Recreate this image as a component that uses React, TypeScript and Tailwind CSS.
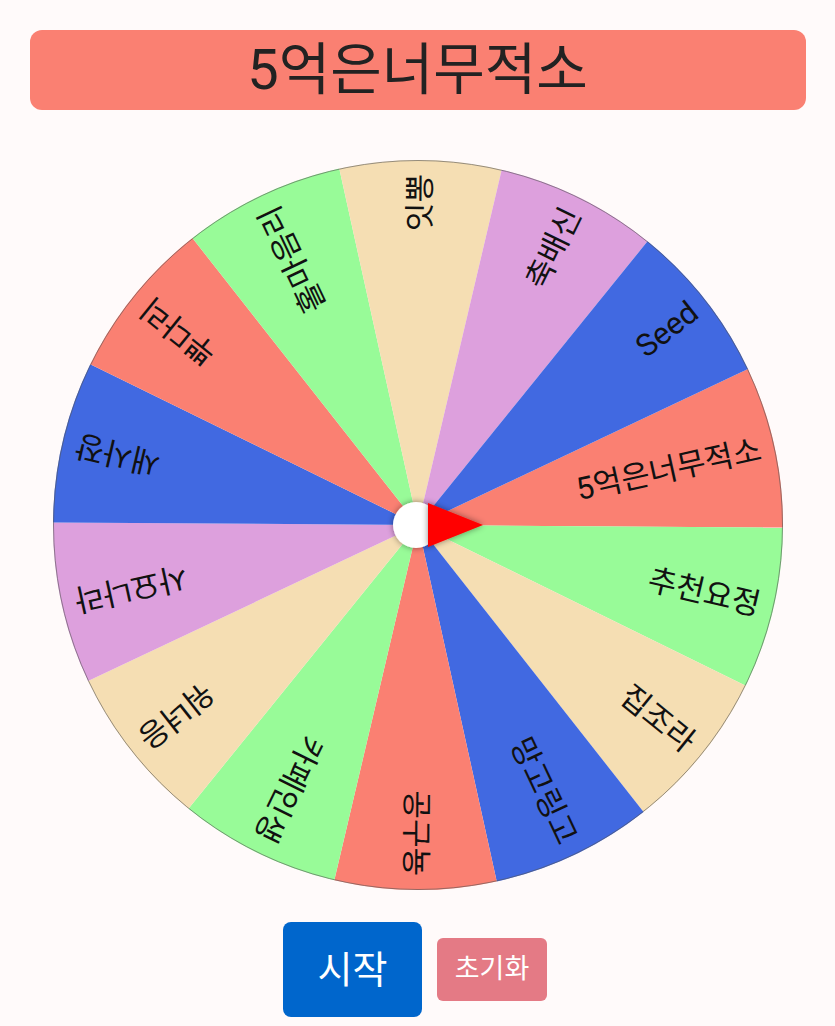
import React from 'react';

const CX = 370;
const CY = 370;
const R = 365;
const OFFSET = 0.4;

const items = [
  { label: '5억은너무적소', color: '#fa8072' },
  { label: '추천요정', color: '#98fb98' },
  { label: '집조라', color: '#f5deb3' },
  { label: '망고링고', color: '#4169e1' },
  { label: '공구뇽', color: '#fa8072' },
  { label: '카페인생', color: '#98fb98' },
  { label: '워녀응', color: '#f5deb3' },
  { label: '사요나라', color: '#dda0dd' },
  { label: '새사장', color: '#4169e1' },
  { label: '뿌다리', color: '#fa8072' },
  { label: '홀마음리', color: '#98fb98' },
  { label: '잇뽕', color: '#f5deb3' },
  { label: '축배신', color: '#dda0dd' },
  { label: 'Seed', color: '#4169e1' },
];

const step = 360 / items.length;
const rad = (d: number) => (d * Math.PI) / 180;
const pt = (d: number, r: number) => [CX + r * Math.cos(rad(d)), CY + r * Math.sin(rad(d))];

const Wheel = () => (
  <svg width={740} height={740} viewBox="0 0 740 740">
    <defs>
      <filter id="shadow" x="-50%" y="-50%" width="200%" height="200%">
        <feDropShadow dx="0" dy="0" stdDeviation="3" floodColor="#000" floodOpacity="0.45" />
      </filter>
    </defs>
    {items.map((it, i) => {
      const a1 = OFFSET + (i - 1) * step;
      const a2 = a1 + step;
      const [x1, y1] = pt(a1, R);
      const [x2, y2] = pt(a2, R);
      const mid = a1 + step / 2;
      return (
        <g key={i}>
          <path d={`M${CX} ${CY} L${x1} ${y1} A${R} ${R} 0 0 1 ${x2} ${y2} Z`} fill={it.color} />
          <text
            x={CX + 351}
            y={CY}
            transform={`rotate(${mid} ${CX} ${CY})`}
            textAnchor="end"
            dominantBaseline="central"
            fontSize={31}
            fill="#111"
          >
            {it.label}
          </text>
        </g>
      );
    })}
    <circle cx={CX} cy={CY} r={R - 0.5} fill="none" stroke="#555" strokeOpacity={0.6} strokeWidth={1} />
    <circle cx={CX - 2} cy={CY} r={23} fill="#fff" filter="url(#shadow)" />
    <polygon points={`${CX + 10},${CY - 22} ${CX + 10},${CY + 22} ${CX + 65},${CY}`} fill="#ff0000" filter="url(#shadow)" />
  </svg>
);

export default function App() {
  return (
    <div
      className="min-h-screen bg-[#fffafa] flex flex-col items-center pt-[30px]"
      style={{ fontFamily: "Roboto, 'Noto Sans CJK KR', sans-serif" }}
    >
      <div className="w-[776px] h-[80px] rounded-xl bg-[#fa8072] flex items-center justify-center text-[56px] text-[#222] leading-none">
        5억은너무적소
      </div>
      <div className="mt-[45px] w-[740px] h-[740px]">
        <Wheel />
      </div>
      <div className="mt-[27px] flex items-center gap-[15px] mr-[5px]">
        <button className="w-[139px] h-[95px] rounded-lg bg-[#0066cc] text-white text-[38px] leading-none">
          시작
        </button>
        <button className="w-[110px] h-[63px] rounded-md bg-[#e47a85] text-white text-[27px] leading-none">
          초기화
        </button>
      </div>
    </div>
  );
}
